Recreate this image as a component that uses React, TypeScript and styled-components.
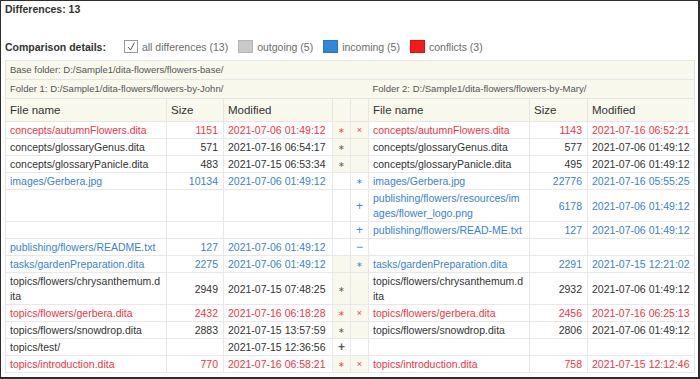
import React from "react";
import styled, { createGlobalStyle } from "styled-components";

const GlobalStyle = createGlobalStyle`
  html, body { margin: 0; padding: 0; background: #fff; }
  body { font-family: "Liberation Sans", Arial, sans-serif; }
`;

type Tone = "red" | "blue" | "dark";

const toneColor: Record<Tone, string> = {
  red: "#f2353f",
  blue: "#3a82d2",
  dark: "#333333",
};

const markColor: Record<Tone, string> = {
  red: "#f2454f",
  blue: "#4a8ad6",
  dark: "#5a5a5a",
};

const Frame = styled.div`
  width: 700px;
  height: 379px;
  box-sizing: border-box;
  border: 1px solid #2e2e2e;
  border-right-width: 2px;
  border-bottom-width: 2px;
  padding: 1px 4px 0 4px;
  overflow: hidden;
  background: #fff;
`;

const Title = styled.div`
  font-size: 10.5px;
  line-height: 14px;
  font-weight: bold;
  color: #333;
`;

const Legend = styled.div`
  display: flex;
  align-items: center;
  height: 13px;
  margin-top: 24px;
  font-size: 10.5px;
  line-height: 12px;
`;

const LegendLabel = styled.span`
  font-weight: bold;
  color: #333;
  margin-right: 18px;
`;

const LegendItem = styled.span`
  display: flex;
  align-items: center;
  margin-right: 10px;
`;

const Checkbox = styled.span`
  display: inline-flex;
  box-sizing: border-box;
  width: 14px;
  height: 13px;
  border: 1px solid #9a9a9a;
  background: #fff;
  margin-right: 4px;
`;

const Swatch = styled.span<{ $color: string; $edge: string }>`
  display: inline-block;
  box-sizing: border-box;
  width: 15px;
  height: 13px;
  background: ${(p) => p.$color};
  border: 1px solid ${(p) => p.$edge};
  margin-right: 4px;
`;

const LegendText = styled.span`
  color: #6c6c6c;
`;

const Table = styled.table`
  margin-top: 7px;
  width: 689px;
  border-collapse: collapse;
  table-layout: fixed;
  border: 1px solid #e2e2e2;
  font-size: 10.5px;
`;

const FolderCell = styled.td`
  background: #f8f8ed;
  color: #555;
  font-size: 9.5px;
  line-height: 14px;
  padding: 2px 3px 2px 4px;
  border-top: 1px solid #e6e6e6;
  border-bottom: 1px solid #e6e6e6;
  white-space: nowrap;
  overflow: hidden;
`;

const HeadCell = styled.th`
  background: #f8f8ed;
  color: #333;
  font-weight: normal;
  font-size: 11.5px;
  line-height: 15px;
  text-align: left;
  padding: 4px 3px 3px 4px;
  border: 1px solid #e6e6e6;
  white-space: nowrap;
  overflow: hidden;
`;

const Cell = styled.td<{ $tone: Tone; $right?: boolean }>`
  color: ${(p) => toneColor[p.$tone]};
  text-align: ${(p) => (p.$right ? "right" : "left")};
  vertical-align: middle;
  line-height: 15px;
  padding: 1px ${(p) => (p.$right ? "5px" : "4px")} 0 4px;
  border: 1px solid #e8e8e8;
  word-break: break-all;
`;

const MarkCell = styled.td<{ $cream: boolean; $tone: Tone; $size: number; $bold?: boolean }>`
  background: ${(p) => (p.$cream ? "#f8f8ec" : "#fff")};
  color: ${(p) => markColor[p.$tone]};
  text-align: center;
  vertical-align: middle;
  font-size: ${(p) => p.$size}px;
  font-weight: ${(p) => (p.$bold ? "bold" : "normal")};
  line-height: 15px;
  padding: 1px 0 0 0;
  border: 1px solid #e8e8e8;
`;

type Side = { name: string; size: string; mod: string } | null;

type Row = {
  tone: Tone;
  left: Side;
  right: Side;
  m1?: string;
  m1Tone?: Tone;
  m2?: string;
  m2Tone?: Tone;
  cream: boolean;
};

const rows: Row[] = [
  {
    tone: "red",
    left: { name: "concepts/autumnFlowers.dita", size: "1151", mod: "2021-07-06 01:49:12" },
    right: { name: "concepts/autumnFlowers.dita", size: "1143", mod: "2021-07-16 06:52:21" },
    m1: "∗", m1Tone: "red", m2: "×", m2Tone: "red", cream: true,
  },
  {
    tone: "dark",
    left: { name: "concepts/glossaryGenus.dita", size: "571", mod: "2021-07-16 06:54:17" },
    right: { name: "concepts/glossaryGenus.dita", size: "577", mod: "2021-07-06 01:49:12" },
    m1: "∗", m1Tone: "dark", cream: true,
  },
  {
    tone: "dark",
    left: { name: "concepts/glossaryPanicle.dita", size: "483", mod: "2021-07-15 06:53:34" },
    right: { name: "concepts/glossaryPanicle.dita", size: "495", mod: "2021-07-06 01:49:12" },
    m1: "∗", m1Tone: "dark", cream: true,
  },
  {
    tone: "blue",
    left: { name: "images/Gerbera.jpg", size: "10134", mod: "2021-07-06 01:49:12" },
    right: { name: "images/Gerbera.jpg", size: "22776", mod: "2021-07-16 05:55:25" },
    m2: "∗", m2Tone: "blue", cream: false,
  },
  {
    tone: "blue",
    left: null,
    right: { name: "publishing/flowers/resources/images/flower_logo.png", size: "6178", mod: "2021-07-06 01:49:12" },
    m2: "+", m2Tone: "blue", cream: false,
  },
  {
    tone: "blue",
    left: null,
    right: { name: "publishing/flowers/READ-ME.txt", size: "127", mod: "2021-07-06 01:49:12" },
    m2: "+", m2Tone: "blue", cream: false,
  },
  {
    tone: "blue",
    left: { name: "publishing/flowers/README.txt", size: "127", mod: "2021-07-06 01:49:12" },
    right: null,
    m2: "−", m2Tone: "blue", cream: false,
  },
  {
    tone: "blue",
    left: { name: "tasks/gardenPreparation.dita", size: "2275", mod: "2021-07-06 01:49:12" },
    right: { name: "tasks/gardenPreparation.dita", size: "2291", mod: "2021-07-15 12:21:02" },
    m2: "∗", m2Tone: "blue", cream: true,
  },
  {
    tone: "dark",
    left: { name: "topics/flowers/chrysanthemum.dita", size: "2949", mod: "2021-07-15 07:48:25" },
    right: { name: "topics/flowers/chrysanthemum.dita", size: "2932", mod: "2021-07-06 01:49:12" },
    m1: "∗", m1Tone: "dark", cream: true,
  },
  {
    tone: "red",
    left: { name: "topics/flowers/gerbera.dita", size: "2432", mod: "2021-07-16 06:18:28" },
    right: { name: "topics/flowers/gerbera.dita", size: "2456", mod: "2021-07-16 06:25:13" },
    m1: "∗", m1Tone: "red", m2: "×", m2Tone: "red", cream: true,
  },
  {
    tone: "dark",
    left: { name: "topics/flowers/snowdrop.dita", size: "2883", mod: "2021-07-15 13:57:59" },
    right: { name: "topics/flowers/snowdrop.dita", size: "2806", mod: "2021-07-06 01:49:12" },
    m1: "∗", m1Tone: "dark", cream: true,
  },
  {
    tone: "dark",
    left: { name: "topics/test/", size: "", mod: "2021-07-15 12:36:56" },
    right: null,
    m1: "+", m1Tone: "dark", cream: false,
  },
  {
    tone: "red",
    left: { name: "topics/introduction.dita", size: "770", mod: "2021-07-16 06:58:21" },
    right: { name: "topics/introduction.dita", size: "758", mod: "2021-07-15 12:12:46" },
    m1: "∗", m1Tone: "red", m2: "×", m2Tone: "red", cream: true,
  },
];

const markSize = (m?: string) => (m === "∗" ? 8 : m === "×" ? 9 : 12);

const SideCells: React.FC<{ side: Side; tone: Tone }> = ({ side, tone }) => (
  <>
    <Cell $tone={tone}>{side ? side.name : ""}</Cell>
    <Cell $tone={tone} $right>{side ? side.size : ""}</Cell>
    <Cell $tone={tone}>{side ? side.mod : ""}</Cell>
  </>
);

const CheckMark = () => (
  <svg width="12" height="11" viewBox="0 0 12 11">
    <path d="M3 6 L5.5 9 L9.5 1.5" fill="none" stroke="#555" strokeWidth="1" />
  </svg>
);

export default function App() {
  return (
    <>
      <GlobalStyle />
      <Frame>
        <Title>Differences: 13</Title>
        <Legend>
          <LegendLabel>Comparison details:</LegendLabel>
          <LegendItem>
            <Checkbox>
              <CheckMark />
            </Checkbox>
            <LegendText>all differences (13)</LegendText>
          </LegendItem>
          <LegendItem>
            <Swatch $color="#c9c9c9" $edge="#b5b5b5" />
            <LegendText>outgoing (5)</LegendText>
          </LegendItem>
          <LegendItem>
            <Swatch $color="#2f88da" $edge="#2a78c0" />
            <LegendText>incoming (5)</LegendText>
          </LegendItem>
          <LegendItem>
            <Swatch $color="#f81a1a" $edge="#e01010" />
            <LegendText>conflicts (3)</LegendText>
          </LegendItem>
        </Legend>
        <Table>
          <colgroup>
            <col style={{ width: 161 }} />
            <col style={{ width: 57 }} />
            <col style={{ width: 109 }} />
            <col style={{ width: 18 }} />
            <col style={{ width: 18 }} />
            <col style={{ width: 161 }} />
            <col style={{ width: 58 }} />
            <col style={{ width: 107 }} />
          </colgroup>
          <tbody>
            <tr>
              <FolderCell colSpan={8}>Base folder: D:/Sample1/dita-flowers/flowers-base/</FolderCell>
            </tr>
            <tr>
              <FolderCell colSpan={5}>Folder 1: D:/Sample1/dita-flowers/flowers-by-John/</FolderCell>
              <FolderCell colSpan={3}>Folder 2: D:/Sample1/dita-flowers/flowers-by-Mary/</FolderCell>
            </tr>
            <tr>
              <HeadCell>File name</HeadCell>
              <HeadCell>Size</HeadCell>
              <HeadCell>Modified</HeadCell>
              <HeadCell />
              <HeadCell />
              <HeadCell>File name</HeadCell>
              <HeadCell>Size</HeadCell>
              <HeadCell>Modified</HeadCell>
            </tr>
            {rows.map((r, i) => (
              <tr key={i}>
                <SideCells side={r.left} tone={r.tone} />
                <MarkCell
                  $cream={r.cream}
                  $tone={r.m1Tone ?? "dark"}
                  $size={markSize(r.m1)}
                  $bold={r.m1 === "+"}
                >
                  {r.m1 ?? ""}
                </MarkCell>
                <MarkCell
                  $cream={r.cream}
                  $tone={r.m2Tone ?? "dark"}
                  $size={markSize(r.m2)}
                >
                  {r.m2 ?? ""}
                </MarkCell>
                <SideCells side={r.right} tone={r.tone} />
              </tr>
            ))}
          </tbody>
        </Table>
      </Frame>
    </>
  );
}
